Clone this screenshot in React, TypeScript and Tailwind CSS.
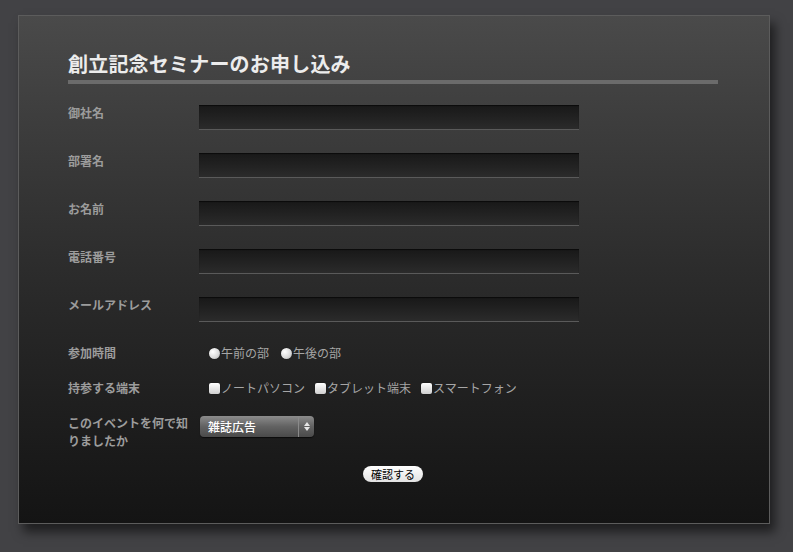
import React from 'react';

const fields = ['御社名', '部署名', 'お名前', '電話番号', 'メールアドレス'];

const Radio: React.FC<{ label: string }> = ({ label }) => (
  <label className="flex items-center">
    <span className="w-[11px] h-[11px] rounded-full bg-[radial-gradient(circle_at_35%_35%,#ffffff,#d8d8d8_60%,#9a9a9a)] shadow-[0_0_1px_rgba(0,0,0,0.8)]" />
    <span className="ml-[1px]">{label}</span>
  </label>
);

const Check: React.FC<{ label: string }> = ({ label }) => (
  <label className="flex items-center">
    <span className="w-[11px] h-[11px] rounded-[2px] bg-gradient-to-b from-[#ffffff] to-[#cfcfcf] shadow-[0_0_1px_rgba(0,0,0,0.8)]" />
    <span className="ml-[1px]">{label}</span>
  </label>
);

const App: React.FC = () => {
  return (
    <div
      className="w-[793px] h-[552px] bg-[#424245] pt-[15px] pl-[18px]"
      style={{ fontFamily: '"Noto Sans CJK JP", "Noto Sans", sans-serif' }}
    >
      <div className="w-[752px] h-[509px] border border-[#5c5c5c] bg-gradient-to-b from-[#4a4a4a] via-[#2c2c2c] to-[#141414] shadow-[5px_8px_10px_rgba(0,0,0,0.55)] pl-[49px] pr-[51px] pt-[34px]">
        <h1 className="text-[20px] leading-[28px] font-bold text-[#ececec] tracking-[0.2px]">
          創立記念セミナーのお申し込み
        </h1>
        <div className="h-[4px] bg-[#6b6b6b] mt-[2px]" />

        <div className="mt-[21px]">
          {fields.map((f) => (
            <div key={f} className="flex h-[48px]">
              <div className="w-[131px] text-[12px] leading-[18px] font-bold text-[#9c9c9c] -mt-[1px]">{f}</div>
              <div className="w-[380px] h-[25px] bg-gradient-to-b from-[#181818] to-[#2b2b2b] border-b border-[#5a5a5a] shadow-[inset_0_1px_1px_rgba(0,0,0,0.6)]" />
            </div>
          ))}

          <div className="flex items-start h-[35px] text-[12px] leading-[18px] -mt-[1px]">
            <div className="w-[131px] font-bold text-[#9c9c9c]">参加時間</div>
            <div className="flex gap-[12px] pl-[10px] text-[#a6a6a6]">
              <Radio label="午前の部" />
              <Radio label="午後の部" />
            </div>
          </div>

          <div className="flex items-start h-[35px] text-[12px] leading-[18px]">
            <div className="w-[131px] font-bold text-[#9c9c9c]">持参する端末</div>
            <div className="flex gap-[10px] pl-[10px] text-[#a6a6a6]">
              <Check label="ノートパソコン" />
              <Check label="タブレット端末" />
              <Check label="スマートフォン" />
            </div>
          </div>

          <div className="flex items-start text-[12px] leading-[18px]">
            <div className="w-[124px] mr-[7px] font-bold text-[#9c9c9c]">このイベントを何で知りましたか</div>
            <div className="pt-[2px] pl-[1px]">
              <div className="flex w-[114px] h-[21px] rounded-[4px] bg-gradient-to-b from-[#8c8c8c] via-[#626262] to-[#4a4a4a] shadow-[0_1px_1px_rgba(0,0,0,0.6)]">
                <div className="flex-1 pl-[8px] text-white font-medium leading-[21px]">雑誌広告</div>
                <div className="w-[16px] border-l border-[#8a8a8a] flex flex-col items-center justify-center gap-[1px]">
                  <svg width="6" height="4" viewBox="0 0 6 4"><path d="M3 0L6 4H0z" fill="#e6e6e6" /></svg>
                  <svg width="6" height="4" viewBox="0 0 6 4"><path d="M0 0h6L3 4z" fill="#e6e6e6" /></svg>
                </div>
              </div>
            </div>
          </div>

          <div className="flex justify-center mt-[16px]">
            <button className="h-[16px] px-[8px] rounded-full bg-gradient-to-b from-[#ffffff] to-[#e2e2e2] text-[11px] leading-[16px] text-black">
              確認する
            </button>
          </div>
        </div>
      </div>
    </div>
  );
};

export default App;
